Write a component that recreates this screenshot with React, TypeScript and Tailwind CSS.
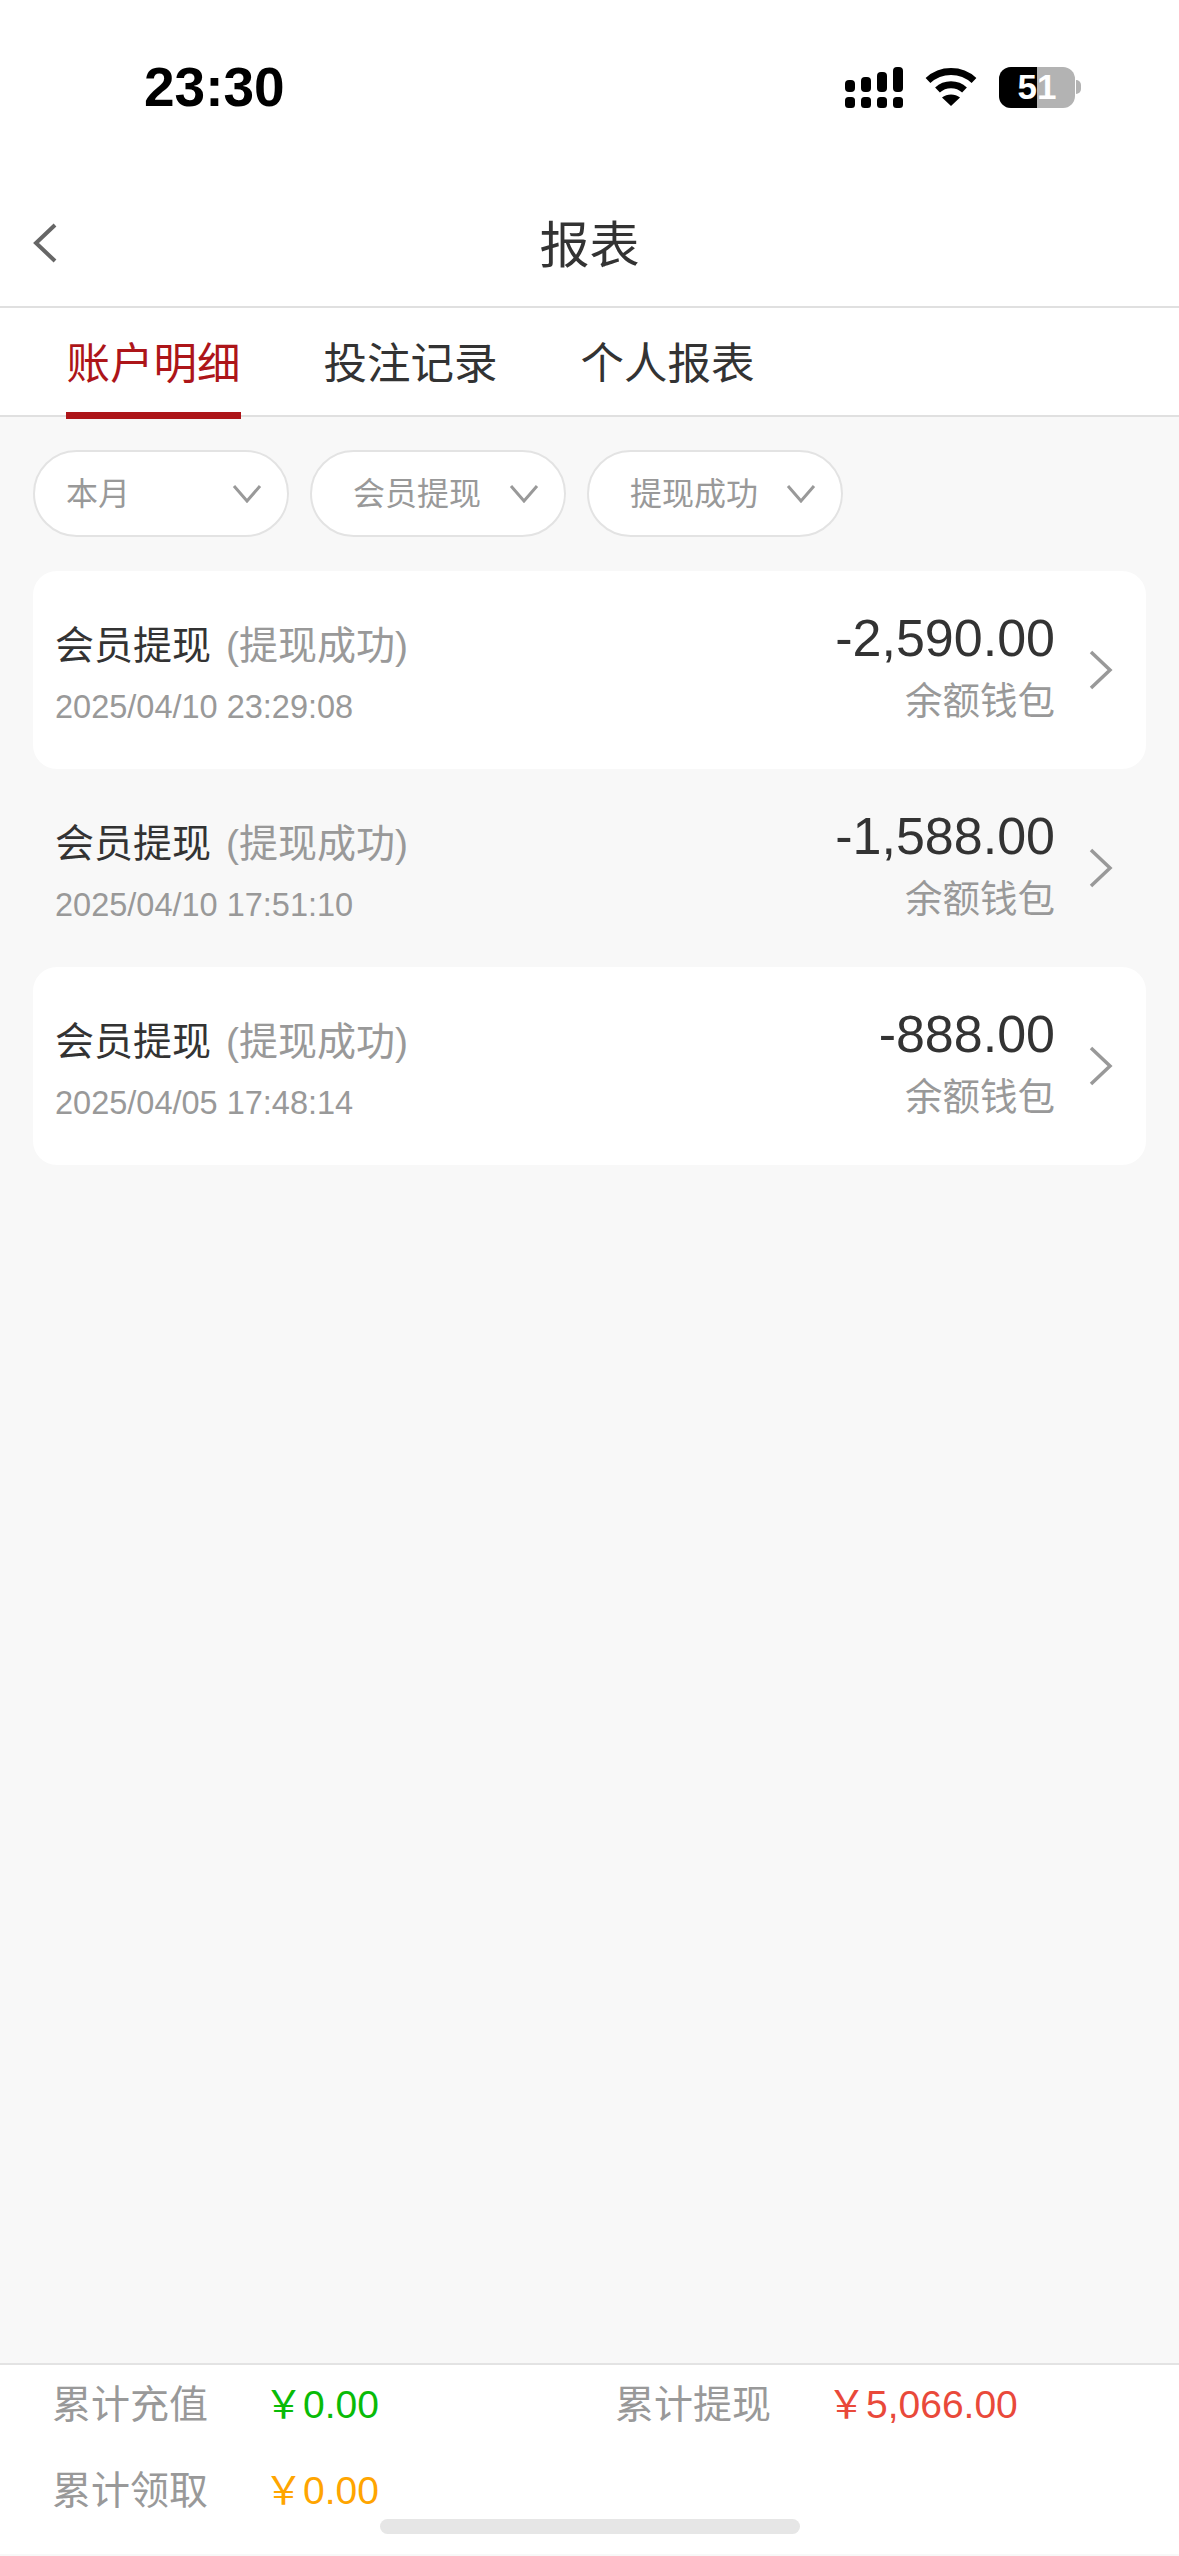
import React from "react";

const rows = [
  { date: "2025/04/10 23:29:08", amount: "-2,590.00", card: true },
  { date: "2025/04/10 17:51:10", amount: "-1,588.00", card: false },
  { date: "2025/04/05 17:48:14", amount: "-888.00", card: true },
];

const filters = [
  { label: "本月", pad: "pl-[31px]" },
  { label: "会员提现", pad: "pl-[41px]" },
  { label: "提现成功", pad: "pl-[41px]" },
];

function StatusIcons() {
  return (
    <div className="flex items-center">
      <svg width="58" height="41" viewBox="0 0 58 41" fill="#000" className="mr-[22px]">
        <rect x="0" y="13" width="10" height="12" rx="4" />
        <rect x="16" y="10" width="10" height="15" rx="4" />
        <rect x="32" y="5" width="10" height="20" rx="4" />
        <rect x="48" y="0" width="10" height="25" rx="4" />
        <rect x="0" y="30" width="10" height="11" rx="3.5" />
        <rect x="16" y="30" width="10" height="11" rx="3.5" />
        <rect x="32" y="30" width="10" height="11" rx="3.5" />
        <rect x="48" y="30" width="10" height="11" rx="3.5" />
      </svg>
      <svg width="52" height="40" viewBox="0 0 52 40" fill="none" className="mr-[22px]">
        <path d="M3 13.5C16 1.5 36 1.5 49 13.5" stroke="#000" strokeWidth="7" />
        <path d="M12.5 23C20 16 32 16 39.5 23" stroke="#000" strokeWidth="7" />
        <path d="M26 39L17 30.5C22 26.5 30 26.5 35 30.5Z" fill="#000" />
      </svg>
      <div className="relative flex h-[41px] w-[76px] overflow-hidden rounded-[12px] bg-[#b3b3b3]">
        <div className="h-full w-[38px] bg-black" />
        <span className="absolute inset-0 flex items-center justify-center text-[35px] font-bold text-white [font-family:'Liberation_Sans',sans-serif]">
          51
        </span>
      </div>
      <div className="ml-[1px] h-[14px] w-[5px] rounded-r-full bg-[#b3b3b3]" />
    </div>
  );
}

function Chevron({ className, dir, color, width = 4 }: { className: string; dir: "left" | "right" | "down"; color: string; width?: number }) {
  const paths = {
    left: "M22 2L3 20L22 38",
    right: "M3 2L22 20L3 38",
    down: "M2 2L15 17L28 2",
  };
  const box = dir === "down" ? "0 0 30 19" : "0 0 25 40";
  return (
    <svg viewBox={box} fill="none" className={className}>
      <path d={paths[dir]} stroke={color} strokeWidth={width} />
    </svg>
  );
}

function Row({ date, amount, card }: { date: string; amount: string; card: boolean }) {
  return (
    <div className={`flex h-[198px] items-center rounded-[24px] pl-[22px] pr-[33px] ${card ? "bg-white" : ""}`}>
      <div className="flex-1 pt-[10px]">
        <div className="flex h-[50px] items-center text-[39px]">
          <span className="text-[#333]">会员提现</span>
          <span className="ml-[15px] text-[39px] text-[#999]">(提现成功)</span>
        </div>
        <div className="mt-[14px] text-[32.5px] leading-[44px] text-[#999]">{date}</div>
      </div>
      <div className="mr-[33px] flex flex-col items-end pb-[6px]">
        <div className="text-[52px] leading-[60px] text-[#333]">{amount}</div>
        <div className="mt-[8px] text-[37.5px] leading-[50px] text-[#999]">余额钱包</div>
      </div>
      <Chevron dir="right" color="#999" width={3.5} className="h-[40px] w-[25px]" />
    </div>
  );
}

function Stat({ label, value, color, className }: { label: string; value: string; color: string; className: string }) {
  return (
    <div className={`flex items-center ${className}`}>
      <span className="w-[212px] text-[39px] text-[#999]">{label}</span>
      <span className={`text-[39px] ${color}`}>{value}</span>
    </div>
  );
}

export default function App() {
  return (
    <div className="flex h-[2556px] w-[1179px] flex-col overflow-hidden bg-[#f8f8f8] [font-family:'Liberation_Sans','Noto_Sans_CJK_SC',sans-serif]">
      <div className="flex h-[174px] shrink-0 items-center justify-between bg-white pl-[144px] pr-[98px]">
        <span className="text-[55px] font-bold text-black">23:30</span>
        <StatusIcons />
      </div>

      <div className="relative flex h-[134px] shrink-0 items-center justify-center border-b-2 border-[#e0e0e0] bg-white pt-[12px]">
        <Chevron dir="left" color="#666" className="absolute left-[33px] top-[48px] h-[42px] w-[25px]" />
        <span className="text-[50px] text-[#333]">报表</span>
      </div>

      <div className="flex h-[109px] shrink-0 gap-[82px] border-b-2 border-[#e0e0e0] bg-white pl-[66px]">
        <div className="relative flex h-full w-[175px] items-center justify-center pt-[6px] text-[43.5px] whitespace-nowrap text-[#ad1519]">
          账户明细
          <div className="absolute bottom-[-4px] left-0 h-[7px] w-full bg-[#ad1519]" />
        </div>
        <div className="flex h-full w-[175px] items-center justify-center pt-[6px] text-[43.5px] whitespace-nowrap text-[#333]">投注记录</div>
        <div className="flex h-full w-[175px] items-center justify-center pt-[6px] text-[43.5px] whitespace-nowrap text-[#333]">个人报表</div>
      </div>

      <div className="mt-[33px] flex shrink-0 gap-[21px] pl-[33px]">
        {filters.map((f) => (
          <div
            key={f.label}
            className={`flex h-[87px] w-[256px] items-center justify-between rounded-[44px] border-2 border-[#e3e3e3] bg-white pr-[25px] text-[32px] text-[#999] ${f.pad}`}
          >
            <span>{f.label}</span>
            <Chevron dir="down" color="#999" width={3} className="h-[19px] w-[30px]" />
          </div>
        ))}
      </div>

      <div className="mt-[34px] flex flex-col px-[33px]">
        {rows.map((r) => (
          <Row key={r.date} {...r} />
        ))}
      </div>

      <div className="relative mb-[2px] mt-auto flex h-[191px] shrink-0 flex-col border-t-2 border-[#e3e3e3] bg-white">
        <div className="mt-[15px] flex h-[50px] pl-[52px]">
          <Stat label="累计充值" value="￥0.00" color="text-[#09bb07]" className="w-[563px]" />
          <Stat label="累计提现" value="￥5,066.00" color="text-[#e9493a]" className="w-[500px]" />
        </div>
        <div className="mt-[36px] flex h-[50px] pl-[52px]">
          <Stat label="累计领取" value="￥0.00" color="text-[#ffa500]" className="w-[563px]" />
        </div>
        <div className="absolute left-[380px] top-[154px] h-[15px] w-[420px] rounded-full bg-[#e6e6e6]" />
      </div>
    </div>
  );
}
